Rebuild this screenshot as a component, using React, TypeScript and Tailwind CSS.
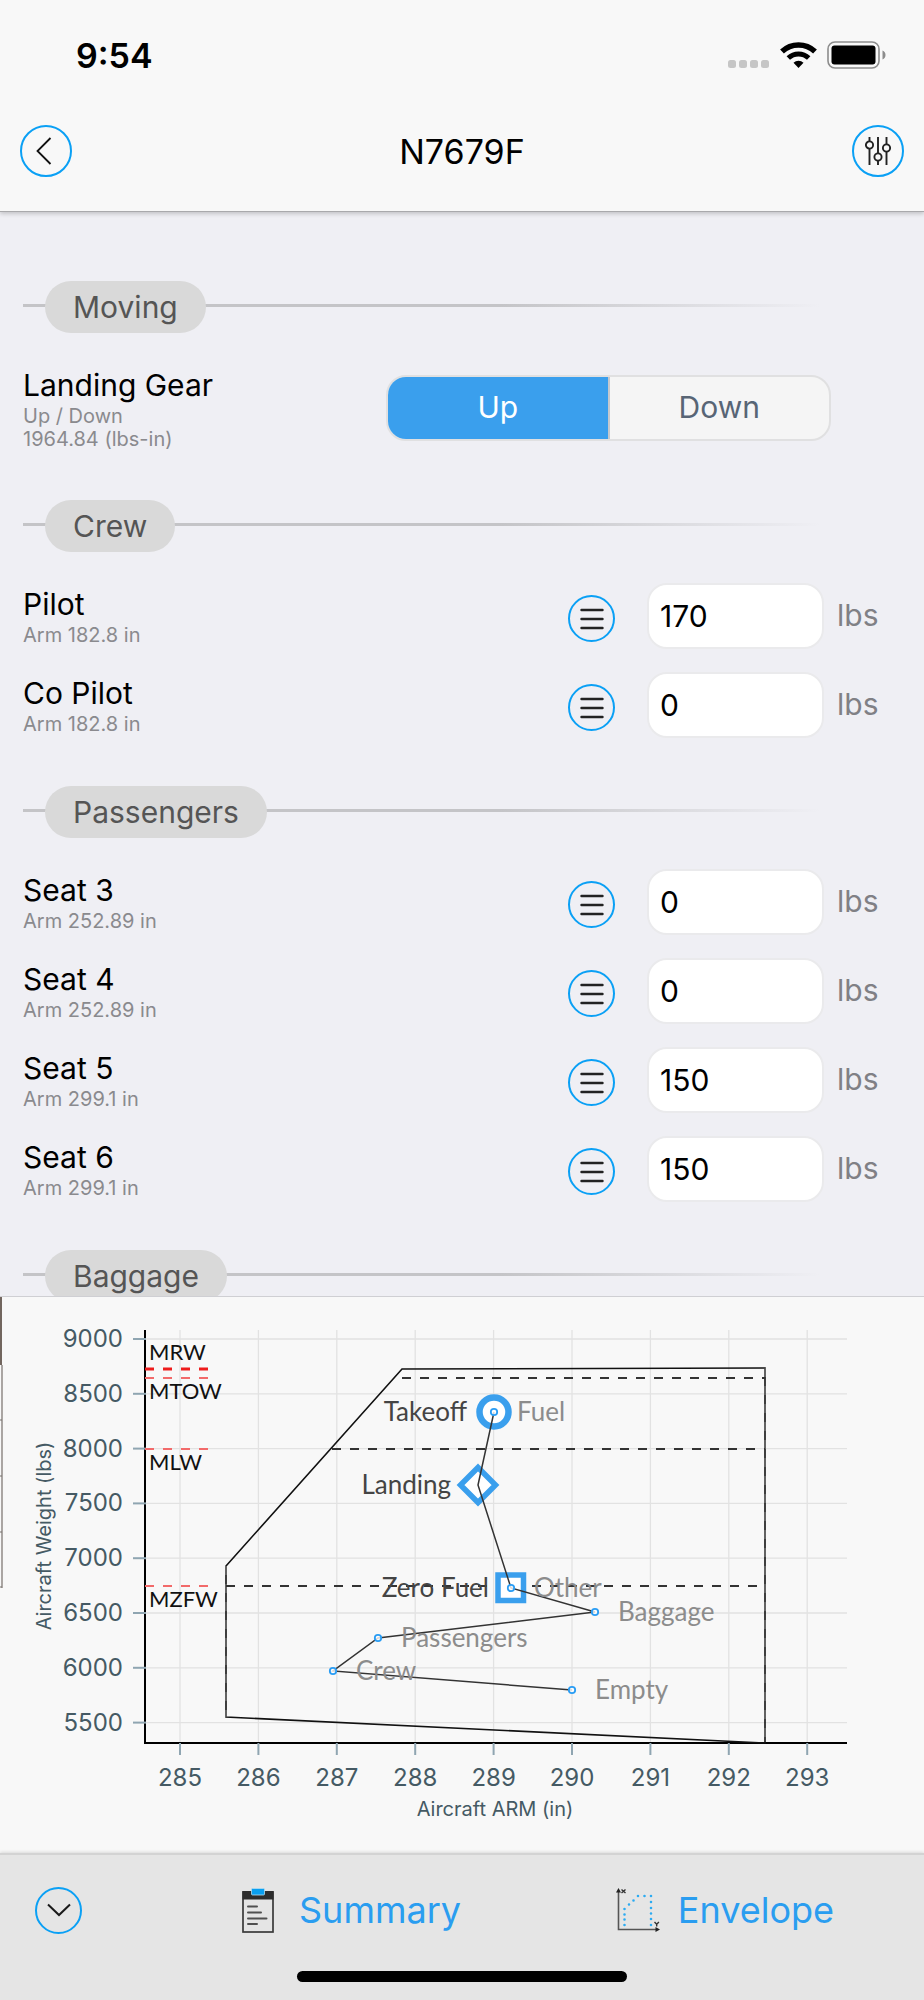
import { useState } from "react";
import type { ReactNode } from "react";

type Station = { name: string; arm: string; weight: string };
type Group = { title: string; stations: Station[] };

const groups: Group[] = [
  {
    title: "Crew",
    stations: [
      { name: "Pilot", arm: "182.8", weight: "170" },
      { name: "Co Pilot", arm: "182.8", weight: "0" },
    ],
  },
  {
    title: "Passengers",
    stations: [
      { name: "Seat 3", arm: "252.89", weight: "0" },
      { name: "Seat 4", arm: "252.89", weight: "0" },
      { name: "Seat 5", arm: "299.1", weight: "150" },
      { name: "Seat 6", arm: "299.1", weight: "150" },
    ],
  },
  { title: "Baggage", stations: [] },
];

// Chart scales: arm (in) -> x, weight (lbs) -> y
const sx = (arm: number) => 180 + (arm - 285) * 78.4;
const sy = (lbs: number) => 42 + ((9000 - lbs) / 500) * 54.8;

const AXIS_X = 145;
const AXIS_Y = 446;
const RIGHT = 847;

const weightTicks = [9000, 8500, 8000, 7500, 7000, 6500, 6000, 5500];
const armTicks = [285, 286, 287, 288, 289, 290, 291, 292, 293];

const limits = [
  { name: "MRW", y: 72, labelY: 63, width: 3, from: 0 },
  { name: "MTOW", y: 81, labelY: 102, width: 2, from: 402 },
  { name: "MLW", y: 152, labelY: 173, width: 2, from: 332 },
  { name: "MZFW", y: 289, labelY: 310, width: 2, from: 226 },
];

const loading = [
  { name: "Empty", x: 572, y: 393 },
  { name: "Crew", x: 333, y: 374 },
  { name: "Passengers", x: 378, y: 341 },
  { name: "Baggage", x: 595, y: 315 },
  { name: "Other", x: 511, y: 291 },
  { name: "Fuel", x: 494, y: 115 },
];

function Ring({ label, className, children }: { label: string; className: string; children: ReactNode }) {
  return (
    <button
      type="button"
      aria-label={label}
      className={`flex shrink-0 items-center justify-center rounded-full border-2 border-[#0aa0f5] ${className}`}
    >
      {children}
    </button>
  );
}

function StatusBar() {
  return (
    <div className="flex h-[110px] items-center justify-between pr-[37px] pl-[76px]">
      <span className="text-[34px] font-semibold text-black">9:54</span>
      <div className="flex items-center gap-[10px]">
        <svg width="42" height="28" viewBox="0 0 42 28" fill="#c6c6c6">
          <rect x="0" y="19" width="8" height="8" rx="2.5" />
          <rect x="11" y="19" width="8" height="8" rx="2.5" />
          <rect x="22" y="19" width="8" height="8" rx="2.5" />
          <rect x="33" y="19" width="8" height="8" rx="2.5" />
        </svg>
        <svg width="37" height="28" viewBox="0 0 37 28" fill="none" stroke="#000">
          <path d="M2 10.5a24 24 0 0 1 33 0" strokeWidth="5.5" />
          <path d="M8.3 17a15 15 0 0 1 20.4 0" strokeWidth="5" />
          <path d="M18.5 27l-5-5.2a7.4 7.4 0 0 1 10 0z" fill="#000" stroke="none" />
        </svg>
        <svg width="60" height="28" viewBox="0 0 60 28">
          <rect x="1" y="1" width="51" height="26" rx="7" fill="none" stroke="#8c8c8c" strokeWidth="1.6" />
          <rect x="4.5" y="4.5" width="44" height="19" rx="3" fill="#000" />
          <path d="M55.5 9.5c4 1.5 4 7.5 0 9z" fill="#8c8c8c" />
        </svg>
      </div>
    </div>
  );
}

function SectionTitle({ title }: { title: string }) {
  return (
    <h2 className="grid items-center pl-[23px]">
      <span className="col-start-1 row-start-1 mr-[104px] mb-1 h-[3px] bg-linear-to-r from-[#c4c4c7] from-60% to-[#c4c4c7]/0" />
      <span className="z-10 col-start-1 row-start-1 ml-[22px] flex h-[52px] items-center justify-self-start rounded-full bg-[#d9d9d9] px-7 text-[30px] text-[#555]">
        {title}
      </span>
    </h2>
  );
}

function StationRow({ station }: { station: Station }) {
  const [weight, setWeight] = useState(station.weight);
  const id = station.name.toLowerCase().replace(/\s/g, "-");

  return (
    <div className="flex h-[89px] items-center pl-[23px]">
      <div className="flex-1 self-start pt-[13px]">
        <label htmlFor={id} className="block text-[30px] leading-10 text-black">
          {station.name}
        </label>
        <p className="text-[20px] leading-[23px] text-[#8a8a8e]">Arm {station.arm} in</p>
      </div>
      <Ring label={`${station.name} presets`} className="mt-1.5 mr-8 size-[47px]">
        <svg width="24" height="22" viewBox="0 0 24 22" stroke="#222" strokeWidth="2.4" strokeLinecap="round">
          <path d="M1.5 2h21M1.5 11h21M1.5 20h21" />
        </svg>
      </Ring>
      <input
        id={id}
        inputMode="numeric"
        value={weight}
        onChange={(e) => setWeight(e.target.value)}
        className="h-[66px] w-[177px] rounded-[20px] border-2 border-[#eaeaec] bg-white px-[11px] text-[30px] text-black outline-none"
      />
      <span className="w-[100px] shrink-0 pl-[13px] text-[30px] text-[#808085]">lbs</span>
    </div>
  );
}

function LandingGear() {
  const [gear, setGear] = useState("Up");

  return (
    <div className="flex h-[111px] items-center pr-[93px] pl-[23px]">
      <div className="flex-1 self-start pt-[13px]">
        <h3 className="text-[30px] leading-10 text-black">Landing Gear</h3>
        <p className="text-[20px] leading-[23px] text-[#8a8a8e]">Up / Down</p>
        <p className="text-[20px] leading-[23px] text-[#8a8a8e]">1964.84 (lbs-in)</p>
      </div>
      <div className="flex h-[66px] w-[445px] overflow-hidden rounded-[20px] border-2 border-[#e0e0e1] bg-[#f5f5f5]">
        {["Up", "Down"].map((position) => (
          <button
            key={position}
            type="button"
            aria-pressed={gear === position}
            onClick={() => setGear(position)}
            className={`flex-1 text-[30px] first:border-r-2 first:border-[#c6c8cc] ${
              gear === position ? "bg-[#3a9fed] text-white" : "text-[#586575]"
            }`}
          >
            {position}
          </button>
        ))}
      </div>
    </div>
  );
}

function EnvelopeChart() {
  return (
    <svg viewBox="0 0 924 556" className="block w-full" role="img" aria-label="Weight and balance envelope">
      {/* edge of the previous page */}
      <rect x="0" y="0" width="2" height="68" fill="#72665f" />
      <path d="M2 68V291M0 123h2M0 179h2M0 235h2M0 290h2" stroke="#77706c" strokeWidth="1.2" fill="none" />

      {/* grid */}
      <g stroke="#e2e2e2" strokeWidth="1.3">
        {weightTicks.map((w) => (
          <line key={w} x1={AXIS_X} x2={RIGHT} y1={sy(w)} y2={sy(w)} />
        ))}
        {armTicks.map((a) => (
          <line key={a} x1={sx(a)} x2={sx(a)} y1="33" y2={AXIS_Y} />
        ))}
      </g>

      {/* axes */}
      <path d={`M${AXIS_X} 33V${AXIS_Y}H${RIGHT}`} fill="none" stroke="#000" strokeWidth="2" />
      <g stroke="#8fa5b1" strokeWidth="2">
        {weightTicks.map((w) => (
          <line key={w} x1="133" x2="146" y1={sy(w)} y2={sy(w)} />
        ))}
        {armTicks.map((a) => (
          <line key={a} x1={sx(a)} x2={sx(a)} y1={AXIS_Y} y2="458" />
        ))}
      </g>
      <g fill="#455a64" fontSize="24">
        {weightTicks.map((w) => (
          <text key={w} x="123" y={sy(w) + 8} textAnchor="end">
            {w}
          </text>
        ))}
        {armTicks.map((a) => (
          <text key={a} x={sx(a)} y="489" textAnchor="middle">
            {a}
          </text>
        ))}
      </g>
      <g fill="#455a64" fontSize="20" textAnchor="middle">
        <text x="495" y="519">Aircraft ARM (in)</text>
        <text transform="translate(51 239) rotate(-90)">Aircraft Weight (lbs)</text>
      </g>

      {/* envelope */}
      <path d="M226 269L402 72L765 71V446L226 420Z" fill="none" stroke="#111" strokeWidth="1.6" />
      <path d="M226 269V420M765 71V446" stroke="#f9f9f9" strokeOpacity="0.25" strokeDasharray="9 9" strokeWidth="1.6" />

      {/* structural limits */}
      {limits.map((l) => (
        <g key={l.name}>
          <line
            x1="145"
            x2="208"
            y1={l.y}
            y2={l.y}
            stroke={l.width === 3 ? "#ee1c1c" : "#f26a6a"}
            strokeWidth={l.width}
            strokeDasharray="9 9"
          />
          {l.from > 0 && (
            <line x1={l.from} x2="765" y1={l.y} y2={l.y} stroke="#333" strokeWidth="1.8" strokeDasharray="9 9" />
          )}
          <text x="149" y={l.labelY} fontSize="22" fill="#111" className="font-[Lato,sans-serif]">
            {l.name}
          </text>
        </g>
      ))}

      {/* landing, zero fuel and takeoff markers */}
      <g fill="#fff" stroke="#3a9fed">
        <circle cx="494" cy="115" r="14.5" strokeWidth="6.5" />
        <path d="M478 170.5L495.5 188L478 205.5L460.5 188Z" strokeWidth="5.5" />
        <rect x="498" y="278" width="25.5" height="25.5" strokeWidth="5.5" />
      </g>
      <path
        d="M572 393L333 374L378 341L595 315L511 291L478 188L494 115"
        fill="none"
        stroke="#333"
        strokeWidth="1.5"
      />
      <g className="font-[Lato,sans-serif]" fontSize="26">
        {loading.map((p) => (
          <g key={p.name}>
            <circle cx={p.x} cy={p.y} r="3.2" fill="#fff" fillOpacity="0.8" stroke="#2a9df4" strokeWidth="1.8" />
            <text x={p.x + 23} y={p.y + 9} fill="#8c8c8c">
              {p.name}
            </text>
          </g>
        ))}
        <g fill="#444" textAnchor="end">
          <text x="467" y="124">Takeoff</text>
          <text x="451" y="197">Landing</text>
          <text x="489" y="300">Zero Fuel</text>
        </g>
      </g>
    </svg>
  );
}

function Toolbar() {
  return (
    <footer className="relative shrink-0 border-t-2 border-[#d3d3d3] bg-[#e5e5e5] shadow-[0_-1px_3px_rgba(0,0,0,0.12)]">
      <div className="flex h-[110px] items-center pr-[90px] pl-[35px]">
        <Ring label="Collapse" className="size-[47px]">
          <svg width="24" height="14" viewBox="0 0 24 14" fill="none" stroke="#1a1a1a" strokeWidth="2">
            <path d="M1 1.5L12 12L23 1.5" />
          </svg>
        </Ring>
        <button type="button" className="ml-[160px] flex items-center gap-[25px] text-[36px] text-[#2a9df0]">
          <svg width="32" height="45" viewBox="0 0 32 45" fill="none">
            <rect x="1" y="4" width="30" height="40" stroke="#3a3a3a" strokeWidth="1.7" />
            <rect x="0.5" y="3" width="31" height="8.5" fill="#2d2d2d" />
            <rect x="9.5" y="0.5" width="13" height="6.5" rx="1" fill="#0a9ff0" stroke="#b4dcf0" strokeWidth="0.8" />
            <path
              d="M6 18.5h9M6 24.5h13M6 30.5h18.500M6 36h9"
              stroke="#505050"
              strokeWidth="2"
              strokeLinecap="round"
            />
          </svg>
          Summary
        </button>
        <button type="button" className="ml-auto flex items-center gap-[18px] text-[36px] text-[#2a9df0]">
          <svg width="44" height="44" viewBox="0 0 44 44" fill="none">
            <path d="M2.5 3V41.500H41" stroke="#555" strokeWidth="1.6" />
            <path d="M0 4.500L2.500 0L5 4.500ZM39.500 39L44 41.500L39.500 44Z" fill="#222" />
            <path d="M5.500 1.500l4 3.500M9.500 1.500l-4 3.500M38.500 34l2.200 2.200l2.200-2.200M40.700 36v2.500" stroke="#333" strokeWidth="1.4" />
            <path
              d="M8.500 37h.01M8.500 31.500h.01M8.500 26.500h.01M8.500 21h.01M13 16.500h.01M17.500 12.500h.01M22 8h.01M28.500 8h.01M35 8h.01M35 14h.01M35 20h.01M35 25.500h.01M35 31h.01M35 37h.01"
              stroke="#2cabf2"
              strokeWidth="2.6"
              strokeLinecap="round"
            />
          </svg>
          Envelope
        </button>
      </div>
      <div className="flex justify-center pt-1.5 pb-[18px]">
        <span className="h-[11px] w-[330px] rounded-full bg-black" />
      </div>
    </footer>
  );
}

export default function App() {
  return (
    <div className="flex h-screen flex-col bg-[#efeff4] font-[Inter,sans-serif]">
      <header className="relative z-20 shrink-0 border-b border-[#a9a9ac] bg-[#f8f8f8] pb-[19px] shadow-[0_2px_4px_rgba(0,0,0,0.18)]">
        <StatusBar />
        <div className="flex h-[82px] items-center justify-between px-5">
          <Ring label="Back" className="size-[52px]">
            <svg width="20" height="28" viewBox="0 0 20 28" fill="none" stroke="#111" strokeWidth="1.8">
              <path d="M14.500 1L1.500 14L14.500 27" />
            </svg>
          </Ring>
          <h1 className="text-[34px] text-black">N7679F</h1>
          <Ring label="Settings" className="size-[52px]">
            <svg width="26" height="30" viewBox="0 0 26 30" fill="#f8f8f8" stroke="#222" strokeWidth="1.9">
              <path d="M4.500 1v28M13 1v28M21.500 1v28" />
              <circle cx="4.5" cy="9" r="3.6" />
              <circle cx="13" cy="21" r="3.6" />
              <circle cx="21.5" cy="12" r="3.6" />
            </svg>
          </Ring>
        </div>
      </header>

      <main className="min-h-0 flex-1 overflow-hidden pt-[69px]">
        <section className="pb-[37px]">
          <SectionTitle title="Moving" />
          <div className="pt-[19px]">
            <LandingGear />
          </div>
        </section>
        {groups.map((group) => (
          <section key={group.title} className="pb-[37px]">
            <SectionTitle title={group.title} />
            <div className="pt-[19px]">
              {group.stations.map((station) => (
                <StationRow key={station.name} station={station} />
              ))}
            </div>
          </section>
        ))}
      </main>

      <div className="shrink-0 border-t border-[#cfcfd3] bg-[#f8f8f8]">
        <EnvelopeChart />
      </div>
      <Toolbar />
    </div>
  );
}
